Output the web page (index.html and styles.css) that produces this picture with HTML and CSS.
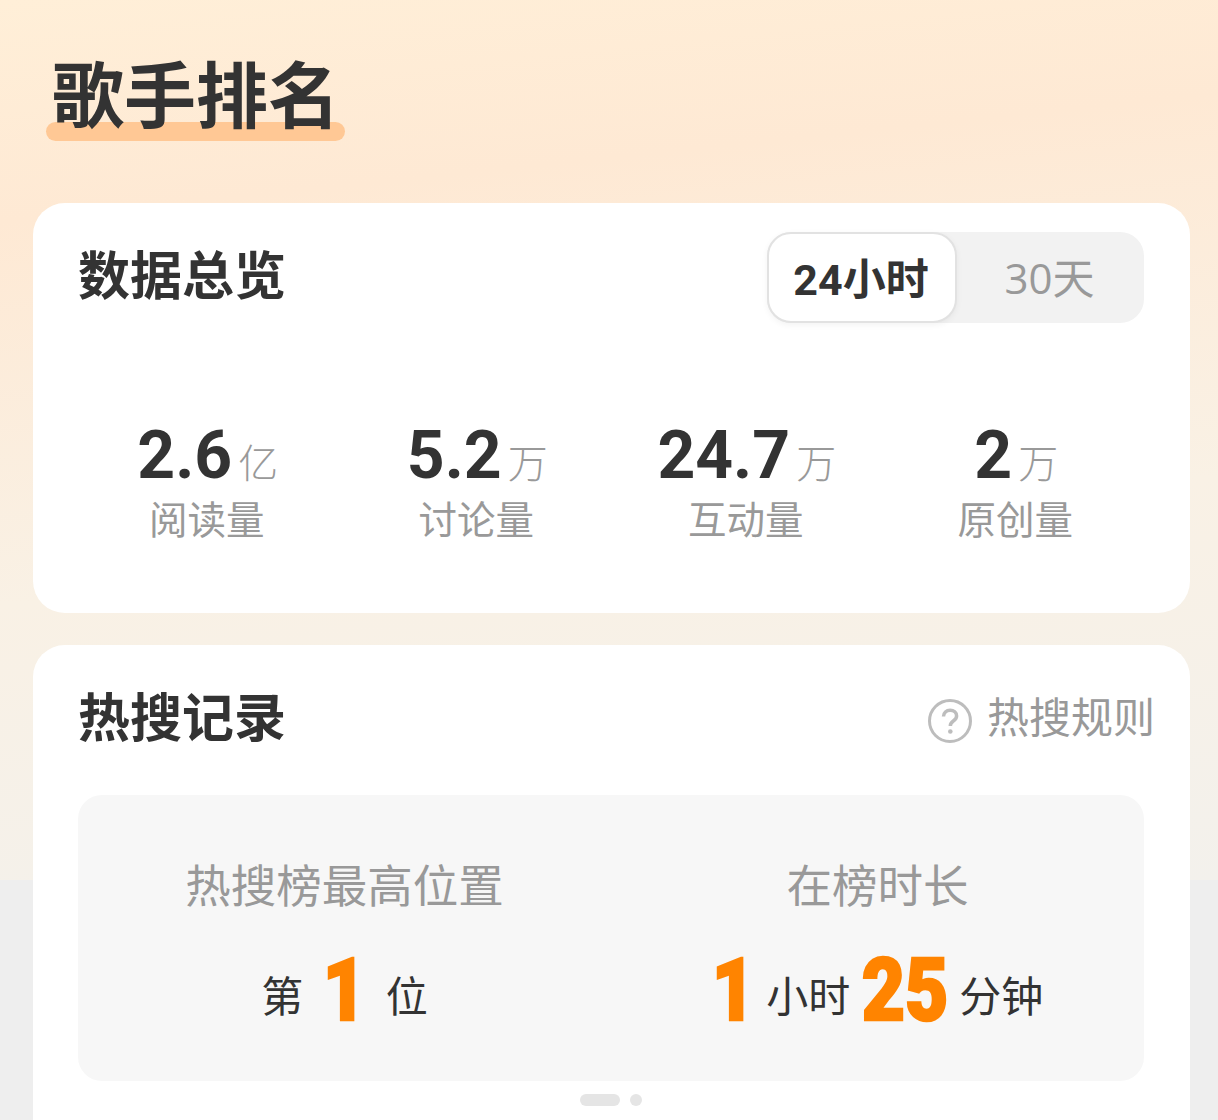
FILE: index.html
```html
<!DOCTYPE html>
<html lang="zh-CN">
<head>
    <meta charset="UTF-8">
    <meta name="viewport" content="width=device-width, initial-scale=1.0">
    <title>歌手排名</title>
    <link rel="stylesheet" href="styles.css">
</head>
<body>
    <div class="page">
        <h1 class="page-title">歌手排名</h1>

        <section class="card overview">
            <div class="card-head">
                <h2 class="card-title">数据总览</h2>
                <div class="range-switch">
                    <button type="button" class="range-btn active">24小时</button>
                    <button type="button" class="range-btn">30天</button>
                </div>
            </div>

            <div class="stats">
                <div class="stat">
                    <div class="stat-value"><span class="stat-num">2.6</span><span class="stat-unit">亿</span></div>
                    <div class="stat-label">阅读量</div>
                </div>
                <div class="stat">
                    <div class="stat-value"><span class="stat-num">5.2</span><span class="stat-unit">万</span></div>
                    <div class="stat-label">讨论量</div>
                </div>
                <div class="stat">
                    <div class="stat-value"><span class="stat-num">24.7</span><span class="stat-unit">万</span></div>
                    <div class="stat-label">互动量</div>
                </div>
                <div class="stat">
                    <div class="stat-value"><span class="stat-num">2</span><span class="stat-unit">万</span></div>
                    <div class="stat-label">原创量</div>
                </div>
            </div>
        </section>

        <section class="card records">
            <div class="card-head records-head">
                <h2 class="card-title">热搜记录</h2>
                <a class="rules-link">
                    <svg class="rules-icon" viewBox="0 0 44 44" width="44" height="44" fill="none" stroke="#bdbdbd">
                        <circle cx="22" cy="22" r="20.5" stroke-width="3"/>
                        <path d="M15.5 17.500c0-3.800 2.900-6.200 6.600-6.200 3.800 0 6.500 2.300 6.500 5.600 0 2.500-1.300 3.700-3.300 5.100-2 1.400-3 2.500-3 5" stroke-width="3.500"/>
                        <circle cx="22.300" cy="32.500" r="2.300" fill="#bdbdbd" stroke="none"/>
                    </svg>
                    <span>热搜规则</span>
                </a>
            </div>

            <div class="record-box">
                <div class="record-col">
                    <div class="record-label">热搜榜最高位置</div>
                    <div class="record-value rank">
                        <span class="record-text">第</span>
                        <span class="record-num one">1</span>
                        <span class="record-text">位</span>
                    </div>
                </div>
                <div class="record-col">
                    <div class="record-label">在榜时长</div>
                    <div class="record-value">
                        <span class="record-num one">1</span>
                        <span class="record-text">小时</span>
                        <span class="record-num two">25</span>
                        <span class="record-text">分钟</span>
                    </div>
                </div>
            </div>

            <div class="pager">
                <span class="pager-dot current"></span>
                <span class="pager-dot"></span>
            </div>
        </section>
    </div>
</body>
</html>
```

FILE: styles.css
```css
* {
    box-sizing: border-box;
}

html, body {
    margin: 0;
    height: 100%;
}

body {
    font-family: "Noto Sans CJK SC", "Noto Sans", sans-serif;
    color: #333;
    overflow: hidden;
}

.page {
    height: 1120px;
    padding: 0 28px 0 33px;
    overflow: hidden;
    background-color: #eeeeee;
    background-image: linear-gradient(174deg, #ffefd8 0%, #fee9d4 22%, #f9f1e5 60%, #f3f1ec 100%);
    background-size: 100% 880px;
    background-repeat: no-repeat;
}

.page-title {
    position: relative;
    z-index: 0;
    width: 299px;
    height: 203px;
    margin: 0 0 0 13px;
    padding: 39px 0 0 6px;
    font-size: 72px;
    line-height: 104px;
    font-weight: 700;
    white-space: nowrap;
}

.page-title::after {
    content: "";
    position: absolute;
    z-index: -1;
    left: 0;
    top: 122px;
    width: 299px;
    height: 19px;
    border-radius: 10px;
    background: #ffc895;
}

.card {
    background: #fff;
    border-radius: 32px;
}

.overview {
    height: 410px;
    margin-bottom: 32px;
    padding: 29px 46px 0 45px;
}

.card-head {
    display: flex;
    justify-content: space-between;
    align-items: flex-start;
}

.card-title {
    margin: 3px 0 0;
    font-size: 52px;
    line-height: 76px;
    font-weight: 700;
}

.range-switch {
    display: flex;
    width: 377px;
    height: 91px;
    background: #f2f2f2;
    border-radius: 24px;
}

.range-btn {
    flex: 0 0 187px;
    height: 91px;
    padding: 0 2px 4px 0;
    border: none;
    background: none;
    font-family: "Open Sans", "Noto Sans CJK SC", sans-serif;
    font-size: 42px;
    color: #999;
}

.range-btn.active {
    flex-basis: 190px;
    background: #fff;
    border: 2px solid #e2e2e2;
    border-radius: 24px;
    box-shadow: 0 2px 6px rgba(0, 0, 0, 0.05);
    font-family: "Roboto", "Noto Sans CJK SC", sans-serif;
    font-size: 43px;
    font-weight: 700;
    color: #333;
}

.stats {
    display: grid;
    grid-template-columns: repeat(4, 1fr);
    margin: 97px -6px 0;
}

.stat {
    text-align: center;
}

.stat-value {
    display: flex;
    justify-content: center;
    align-items: baseline;
    gap: 6px;
    height: 72px;
    padding-left: 2px;
    line-height: 72px;
}

.stat-num {
    font-family: "Roboto", sans-serif;
    font-size: 66px;
    font-weight: 700;
}

.stat-unit {
    font-size: 40px;
    font-weight: 300;
    color: #999;
}

.stat-label {
    font-size: 38.500px;
    line-height: 56px;
    margin-top: -3px;
    color: #999;
}

.records {
    height: 600px;
    padding: 29px 46px 0 45px;
}

.records-head {
    height: 121px;
}

.rules-link {
    display: flex;
    align-items: center;
    gap: 15px;
    margin: 5px -11px 0 0;
    font-size: 42px;
    line-height: 72px;
    color: #999;
}

.rules-icon {
    flex: none;
    margin-top: 11px;
}

.record-box {
    display: grid;
    grid-template-columns: 1fr 1fr;
    height: 286px;
    padding-top: 54px;
    background: #f7f7f7;
    border-radius: 24px;
}

.record-col {
    text-align: center;
}

.record-label {
    font-size: 45.500px;
    line-height: 68px;
    color: #999;
}

.record-value {
    display: flex;
    justify-content: center;
    align-items: baseline;
    gap: 12px;
    margin-top: 23px;
    height: 84px;
}

.record-value.rank {
    gap: 20px;
}

/* heavy condensed digits: no such font here, so squeeze a black weight */
.record-num {
    display: inline-block;
    font-family: "Roboto", sans-serif;
    font-size: 88px;
    line-height: 84px;
    font-weight: 900;
    color: #ff8400;
    -webkit-text-stroke: 2.500px #ff8400;
    transform: translateY(8px) scaleX(0.85);
}

.record-num.one {
    margin: 0 -4.300px;
}

.record-num.two {
    margin: 0 -8.600px;
}

.record-text {
    font-size: 42px;
    font-weight: 400;
    color: #333;
}

.pager {
    display: flex;
    justify-content: center;
    gap: 10px;
    margin-top: 13px;
}

.pager-dot {
    width: 12px;
    height: 12px;
    border-radius: 6px;
    background: #e5e5e5;
}

.pager-dot.current {
    width: 40px;
}
```
